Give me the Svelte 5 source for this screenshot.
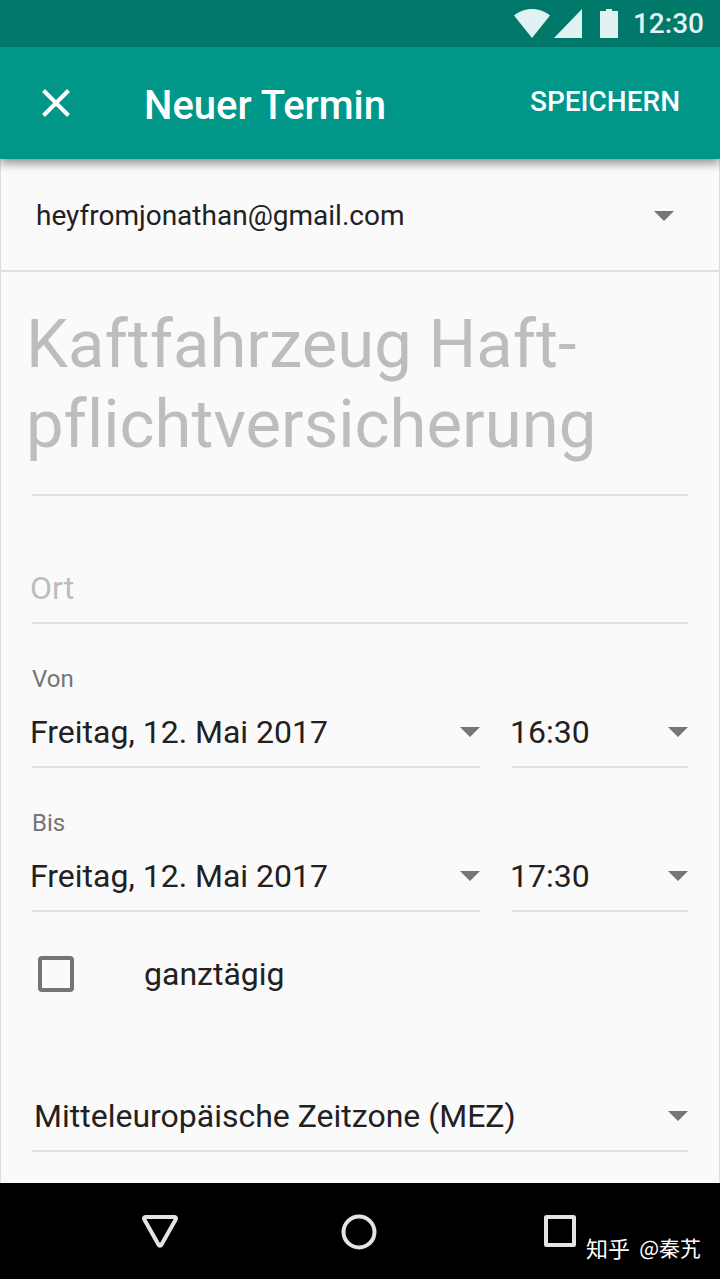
<script lang="ts">
	const dates = ['Freitag, 12. Mai 2017', 'Samstag, 13. Mai 2017'];
	const times = ['16:30', '17:00', '17:30', '18:00'];
	const accounts = ['heyfromjonathan@gmail.com'];
	const zones = ['Mitteleuropäische Zeitzone (MEZ)'];

	let account = $state(accounts[0]);
	let title = $state('');
	let place = $state('');
	let zone = $state(zones[0]);
	let allDay = $state(false);

	let rows = $state([
		{ id: 'from', label: 'Von', date: dates[0], time: '16:30' },
		{ id: 'to', label: 'Bis', date: dates[0], time: '17:30' }
	]);
</script>

{#snippet arrow()}
	<svg class="arrow" viewBox="0 0 20 10" aria-hidden="true"><path d="M0 0h20L10 10z" /></svg>
{/snippet}

<div class="screen">
	<div class="status">
		<svg width="36" height="29" viewBox="0 0 36 29" aria-hidden="true">
			<path d="M0 6.500C5 2.500 11 0 18 0s13 2.500 18 6.500L18 29z" />
		</svg>
		<svg width="28" height="29" viewBox="0 0 28 29" aria-hidden="true">
			<path d="M28 0v29H0z" />
		</svg>
		<svg class="battery" width="18" height="29" viewBox="0 0 18 29" aria-hidden="true">
			<path d="M6 0h6v2h6v27H0V2h6z" />
		</svg>
		<time>12:30</time>
	</div>

	<header>
		<button class="close" type="button" aria-label="Schließen">
			<svg width="28" height="28" viewBox="0 0 28 28" aria-hidden="true">
				<path d="M1.500 1.500l25 25M26.500 1.500l-25 25" />
			</svg>
		</button>
		<h1>Neuer Termin</h1>
		<button class="save" type="submit" form="event">SPEICHERN</button>
	</header>

	<main>
		<form id="event" onsubmit={(e) => e.preventDefault()}>
			<div class="account picker">
				<select aria-label="Konto" bind:value={account}>
					{#each accounts as a (a)}
						<option>{a}</option>
					{/each}
				</select>
				{@render arrow()}
			</div>

			<div class="fields">
				<textarea
					class="title"
					rows="2"
					aria-label="Titel"
					placeholder={'Kaftfahrzeug Haft-\npflichtversicherung'}
					bind:value={title}
				></textarea>

				<div class="field place">
					<input type="text" aria-label="Ort" placeholder="Ort" bind:value={place} />
				</div>

				{#each rows as row (row.id)}
					<div class="when">
						<label for="{row.id}-date">{row.label}</label>
						<div class="pair">
							<div class="field picker">
								<select id="{row.id}-date" bind:value={row.date}>
									{#each dates as d (d)}
										<option>{d}</option>
									{/each}
								</select>
								{@render arrow()}
							</div>
							<div class="field picker">
								<select aria-label="{row.label} Uhrzeit" bind:value={row.time}>
									{#each times as t (t)}
										<option>{t}</option>
									{/each}
								</select>
								{@render arrow()}
							</div>
						</div>
					</div>
				{/each}

				<label class="all-day">
					<input type="checkbox" bind:checked={allDay} />
					<span>ganztägig</span>
				</label>

				<div class="field picker zone">
					<select aria-label="Zeitzone" bind:value={zone}>
						{#each zones as z (z)}
							<option>{z}</option>
						{/each}
					</select>
					{@render arrow()}
				</div>
			</div>
		</form>
	</main>

	<nav>
		<button type="button" aria-label="Zurück">
			<svg width="40" height="40" viewBox="0 0 40 40" aria-hidden="true">
				<path d="M5.500 6h29a1.500 1.500 0 0 1 1.300 2.300L21.400 33.800a1.600 1.600 0 0 1-2.800 0L4.200 8.300A1.500 1.500 0 0 1 5.500 6z" />
			</svg>
		</button>
		<button type="button" aria-label="Startseite">
			<svg width="40" height="40" viewBox="0 0 40 40" aria-hidden="true">
				<circle cx="19" cy="21" r="15.500" />
			</svg>
		</button>
		<button type="button" aria-label="Übersicht">
			<svg width="40" height="40" viewBox="0 0 40 40" aria-hidden="true">
				<rect x="6" y="6" width="28" height="28" rx="0.500" />
			</svg>
		</button>
		<p class="credit"><span>知乎</span> <span>@秦艽</span></p>
	</nav>
</div>

<style>
	:global(body) {
		margin: 0;
		background: #fafafa;
	}

	.screen {
		display: flex;
		flex-direction: column;
		min-height: 100vh;
		font-family: Roboto, 'Noto Sans CJK SC', sans-serif;
		color: #212121;
	}

	button,
	input,
	select,
	textarea {
		margin: 0;
		padding: 0;
		border: 0;
		border-radius: 0;
		background: none;
		color: inherit;
		font: inherit;
		appearance: none;
	}

	svg {
		display: block;
	}

	.status {
		display: flex;
		align-items: center;
		justify-content: flex-end;
		gap: 4px;
		height: 47px;
		padding-right: 16px;
		background: #00796b;
		color: #e0f2f1;
		font-size: 28px;
		font-weight: 500;
		z-index: 2;
	}

	.status svg {
		fill: currentColor;
	}

	.status .battery {
		margin: 0 11px 0 14px;
	}

	header {
		display: flex;
		align-items: center;
		height: 112px;
		padding: 0 40px;
		background: #009688;
		color: #fff;
		box-shadow: 0 4px 10px rgba(0, 0, 0, 0.45);
		z-index: 1;
	}

	.close {
		width: 104px;
		padding: 2px;
	}

	.close svg {
		fill: none;
		stroke: currentColor;
		stroke-width: 4;
	}

	h1 {
		flex: 1;
		margin: 0;
		padding-top: 4px;
		font-size: 40px;
		font-weight: 500;
	}

	.save {
		padding-bottom: 4px;
		font-size: 28px;
		font-weight: 500;
	}

	main {
		flex: 1;
		background: #fafafa;
		box-shadow: inset 1px 0 #dcdcdc, inset -1px 0 #dcdcdc;
	}

	.picker {
		display: grid;
		align-items: center;
	}

	.picker > :global(*) {
		grid-area: 1 / 1;
	}

	.picker select {
		width: 100%;
		padding-right: 32px;
	}

	.arrow {
		justify-self: end;
		width: 20px;
		height: 10px;
		fill: #757575;
		pointer-events: none;
	}

	.account {
		height: 109px;
		padding: 2px 46px 0 36px;
		border-bottom: 2px solid #e1e1e1;
		font-size: 28px;
	}

	.fields {
		padding: 32px 32px 28px;
	}

	/* Text hangs slightly left of the rule below it */
	.title {
		display: block;
		box-sizing: content-box;
		width: 100%;
		height: 160px;
		margin-left: -6px;
		padding: 0 6px 32px 0;
		background: linear-gradient(#e1e1e1, #e1e1e1) 6px 100% / calc(100% - 6px) 2px no-repeat;
		font-size: 67px;
		font-variant-ligatures: none;
		line-height: 80px;
		overflow: hidden;
		resize: none;
	}

	.field {
		margin-left: -2px;
		padding-bottom: 8px;
		background: linear-gradient(#e1e1e1, #e1e1e1) 2px 100% / calc(100% - 2px) 2px no-repeat;
		font-size: 32px;
	}

	.field input,
	.field select {
		display: block;
		width: 100%;
		height: 56px;
	}

	::placeholder {
		color: #bdbdbd;
		opacity: 1;
	}

	.place {
		margin-top: 64px;
	}

	.when {
		margin-top: 40px;
	}

	.when label {
		display: block;
		margin-bottom: 10px;
		color: #757575;
		font-size: 24px;
		line-height: 30px;
	}

	.pair {
		display: grid;
		grid-template-columns: 28fr 11fr;
		gap: 32px;
	}

	.all-day {
		display: flex;
		align-items: center;
		gap: 70px;
		padding: 44px 6px;
		font-size: 32px;
		line-height: 36px;
	}

	.all-day input {
		box-sizing: border-box;
		width: 36px;
		height: 36px;
		border: 4px solid #757575;
		border-radius: 4px;
	}

	.all-day input:checked {
		background: #009688;
	}

	.zone {
		margin-top: 52px;
	}

	.zone select {
		padding-left: 4px;
	}

	nav {
		position: relative;
		display: grid;
		grid-template-columns: repeat(3, 1fr);
		height: 96px;
		padding: 0 calc(100% / 12);
		background: #000;
	}

	nav button {
		display: grid;
		place-items: center;
	}

	nav svg {
		fill: none;
		stroke: #e4e4e4;
		stroke-width: 4;
	}

	.credit {
		position: absolute;
		right: 19px;
		bottom: 16px;
		display: flex;
		gap: 9px;
		margin: 0;
		color: #fff;
		font-family: 'Noto Sans CJK SC', sans-serif;
		font-size: 21px;
		line-height: 32px;
	}

	.credit span:first-child {
		font-size: 22px;
	}
</style>
